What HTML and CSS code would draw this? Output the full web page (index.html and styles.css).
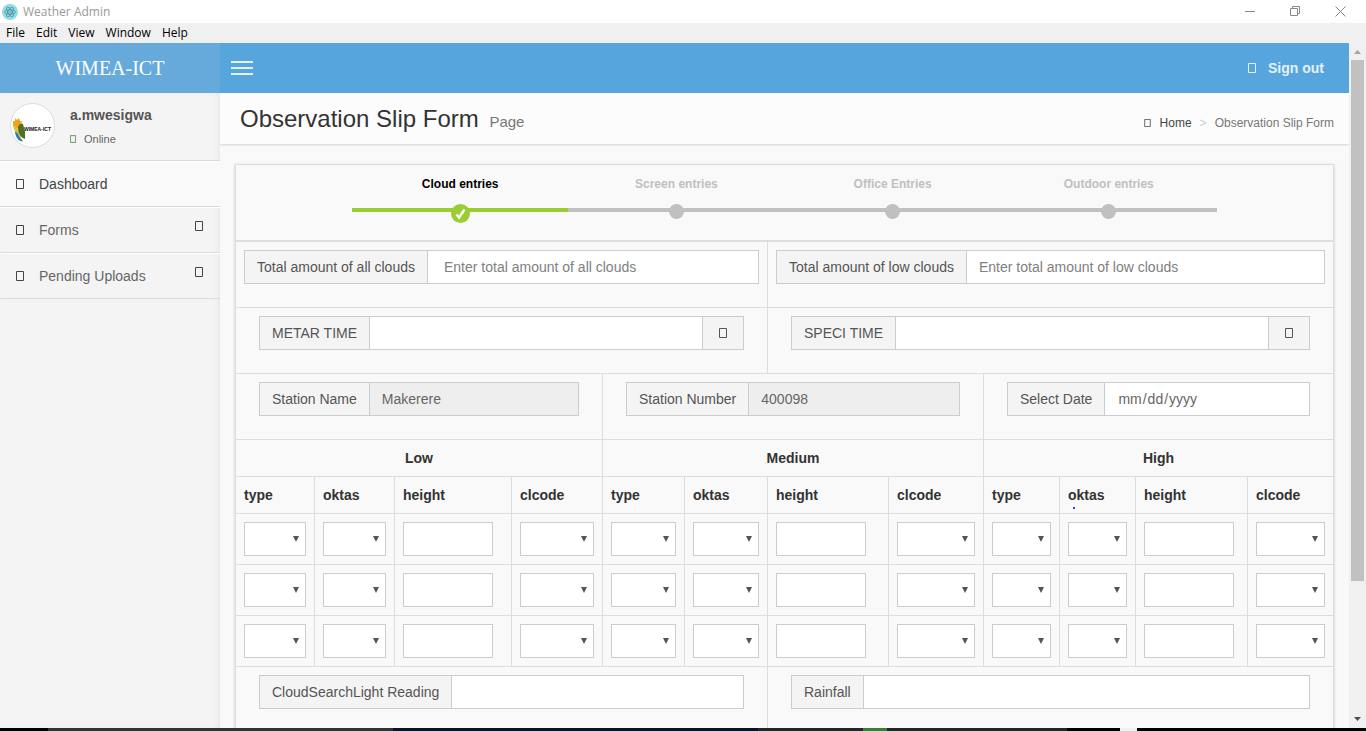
FILE: index.html
```html
<!DOCTYPE html>
<html lang="en">
<head>
<meta charset="utf-8">
<title>Weather Admin</title>
<link rel="stylesheet" href="styles.css">
</head>
<body>
<svg class="defs" aria-hidden="true">
  <symbol id="box" viewBox="0 0 8 10"><path d="M.5 .5h7v9h-7z" fill="none" stroke="currentColor"/></symbol>
</svg>
<div class="window">
  <div class="titlebar">
    <svg class="app-icon" viewBox="0 0 16 16" aria-hidden="true">
      <circle cx="8" cy="8" r="8" fill="#8fdbe6"/>
      <g fill="none" stroke="#4c8f9c" stroke-width=".8">
        <ellipse cx="8" cy="8" rx="5.4" ry="2.1"/>
        <ellipse cx="8" cy="8" rx="5.4" ry="2.1" transform="rotate(60 8 8)"/>
        <ellipse cx="8" cy="8" rx="5.4" ry="2.1" transform="rotate(120 8 8)"/>
      </g>
      <circle cx="8" cy="8" r=".8" fill="#4c8f9c"/>
    </svg>
    <span class="app-name">Weather Admin</span>
    <div class="window-buttons">
      <button type="button" aria-label="Minimize"><svg width="11" height="11" viewBox="0 0 11 11"><path d="M0 5.5h10"/></svg></button>
      <button type="button" aria-label="Restore"><svg width="11" height="11" viewBox="0 0 11 11"><path d="M.5 2.5h7v7h-7zM2.5 2.5v-2h7v7h-2"/></svg></button>
      <button type="button" aria-label="Close"><svg width="11" height="11" viewBox="0 0 11 11"><path d="M.5 .5l10 10M10.500 .5l-10 10"/></svg></button>
    </div>
  </div>
  <nav class="menubar" aria-label="Application menu">
    <button type="button">File</button>
    <button type="button">Edit</button>
    <button type="button">View</button>
    <button type="button">Window</button>
    <button type="button">Help</button>
  </nav>

  <div class="viewport">
    <div class="page">
      <header class="main-header">
        <a class="logo" href="#">WIMEA-ICT</a>
        <div class="navbar">
          <button type="button" class="toggle" aria-label="Toggle navigation"><span></span><span></span><span></span></button>
          <a class="signout" href="#"><svg class="glyph"><use href="#box"/></svg>Sign out</a>
        </div>
      </header>

      <div class="body">
        <aside class="sidebar">
          <div class="user-panel">
            <svg class="avatar" viewBox="0 0 45 45" role="img" aria-label="WIMEA-ICT">
              <circle cx="22.500" cy="22.500" r="22" fill="#fff" stroke="#dcdcdc"/>
              <path d="M3 22l0-4 2 0 0-3 2 2 2-2 1 3 2 0-1 4-4 4-3 0z" fill="#f3a21b"/>
              <path d="M4 23c3 1 5 4 6 9l3 7c-6-3-9-9-9-16z" fill="#d9c23a"/>
              <path d="M8 24c1-3 3-4 5-3l2 8 0 7c-5-2-7-6-7-12z" fill="#4f6f2a"/>
              <path d="M5 29c4 0 3 6 8 9-4 1-7-3-8-9z" fill="#2279c4"/>
              <text x="14" y="28" class="avatar-text">WIMEA-ICT</text>
            </svg>
            <div>
              <p class="user-name">a.mwesigwa</p>
              <a class="status" href="#"><svg class="glyph"><use href="#box"/></svg>Online</a>
            </div>
          </div>
          <nav class="side-menu" aria-label="Main">
            <a class="active" href="#"><svg class="glyph"><use href="#box"/></svg><span>Dashboard</span></a>
            <a href="#"><svg class="glyph"><use href="#box"/></svg><span>Forms</span><svg class="glyph caret"><use href="#box"/></svg></a>
            <a href="#"><svg class="glyph"><use href="#box"/></svg><span>Pending Uploads</span><svg class="glyph caret"><use href="#box"/></svg></a>
          </nav>
        </aside>

        <main class="content">
          <div class="content-header">
            <h1>Observation Slip Form <small>Page</small></h1>
            <nav class="breadcrumb" aria-label="Breadcrumb">
              <a href="#"><svg class="glyph"><use href="#box"/></svg>Home</a>
              <span class="sep">&gt;</span>
              <span>Observation Slip Form</span>
            </nav>
          </div>

          <form class="panel">
            <table class="slip">
              <colgroup>
                <col class="w79"><col class="w80"><col class="w117"><col class="w91">
                <col class="w82"><col class="w83"><col class="w121"><col class="w95">
                <col class="w76"><col class="w76"><col class="w112"><col class="w86">
              </colgroup>
              <thead>
                <tr><th colspan="12">
                  <ol class="steps">
                    <li class="current">Cloud entries<span class="dot"><svg viewBox="0 0 19 19"><path d="M5.500 10.500l2.500 3 5.500-8" fill="none" stroke="#fff" stroke-width="2.400"/></svg></span></li>
                    <li>Screen entries<span class="dot"></span></li>
                    <li>Office Entries<span class="dot"></span></li>
                    <li>Outdoor entries<span class="dot"></span></li>
                  </ol>
                </th></tr>
              </thead>
              <tbody>
                <tr>
                  <td colspan="6"><div class="group"><label for="all">Total amount of all clouds</label><input id="all" class="indent" type="text" placeholder="Enter total amount of all clouds"></div></td>
                  <td colspan="6"><div class="group"><label for="low">Total amount of low clouds</label><input id="low" type="text" placeholder="Enter total amount of low clouds"></div></td>
                </tr>
                <tr>
                  <td colspan="6"><div class="group inset"><label for="metar">METAR TIME</label><input id="metar" type="text"><button type="button" aria-label="Pick METAR time"><svg class="glyph"><use href="#box"/></svg></button></div></td>
                  <td colspan="6"><div class="group inset"><label for="speci">SPECI TIME</label><input id="speci" type="text"><button type="button" aria-label="Pick SPECI time"><svg class="glyph"><use href="#box"/></svg></button></div></td>
                </tr>
                <tr>
                  <td colspan="4"><div class="group inset"><label for="station">Station Name</label><input id="station" type="text" value="Makerere" readonly></div></td>
                  <td colspan="4"><div class="group inset"><label for="number">Station Number</label><input id="number" type="text" value="400098" readonly></div></td>
                  <td colspan="4"><div class="group inset"><label for="date">Select Date</label><input id="date" type="date"></div></td>
                </tr>
                <tr class="levels"><th colspan="4">Low</th><th colspan="4">Medium</th><th colspan="4">High</th></tr>
                <tr class="fields">
                  <th>type</th><th>oktas</th><th>height</th><th>clcode</th>
                  <th>type</th><th>oktas</th><th>height</th><th>clcode</th>
                  <th>type</th><th class="marked">oktas</th><th>height</th><th>clcode</th>
                </tr>
                <tr>
                  <td><div class="pick"><select aria-label="Low type 1"></select></div></td><td><div class="pick"><select aria-label="Low oktas 1"></select></div></td><td><input class="height" type="text" aria-label="Low height 1"></td><td><div class="pick"><select aria-label="Low clcode 1"></select></div></td>
                  <td><div class="pick"><select aria-label="Medium type 1"></select></div></td><td><div class="pick"><select aria-label="Medium oktas 1"></select></div></td><td><input class="height" type="text" aria-label="Medium height 1"></td><td><div class="pick"><select aria-label="Medium clcode 1"></select></div></td>
                  <td><div class="pick"><select aria-label="High type 1"></select></div></td><td><div class="pick"><select aria-label="High oktas 1"></select></div></td><td><input class="height" type="text" aria-label="High height 1"></td><td><div class="pick"><select aria-label="High clcode 1"></select></div></td>
                </tr>
                <tr>
                  <td><div class="pick"><select aria-label="Low type 2"></select></div></td><td><div class="pick"><select aria-label="Low oktas 2"></select></div></td><td><input class="height" type="text" aria-label="Low height 2"></td><td><div class="pick"><select aria-label="Low clcode 2"></select></div></td>
                  <td><div class="pick"><select aria-label="Medium type 2"></select></div></td><td><div class="pick"><select aria-label="Medium oktas 2"></select></div></td><td><input class="height" type="text" aria-label="Medium height 2"></td><td><div class="pick"><select aria-label="Medium clcode 2"></select></div></td>
                  <td><div class="pick"><select aria-label="High type 2"></select></div></td><td><div class="pick"><select aria-label="High oktas 2"></select></div></td><td><input class="height" type="text" aria-label="High height 2"></td><td><div class="pick"><select aria-label="High clcode 2"></select></div></td>
                </tr>
                <tr>
                  <td><div class="pick"><select aria-label="Low type 3"></select></div></td><td><div class="pick"><select aria-label="Low oktas 3"></select></div></td><td><input class="height" type="text" aria-label="Low height 3"></td><td><div class="pick"><select aria-label="Low clcode 3"></select></div></td>
                  <td><div class="pick"><select aria-label="Medium type 3"></select></div></td><td><div class="pick"><select aria-label="Medium oktas 3"></select></div></td><td><input class="height" type="text" aria-label="Medium height 3"></td><td><div class="pick"><select aria-label="Medium clcode 3"></select></div></td>
                  <td><div class="pick"><select aria-label="High type 3"></select></div></td><td><div class="pick"><select aria-label="High oktas 3"></select></div></td><td><input class="height" type="text" aria-label="High height 3"></td><td><div class="pick"><select aria-label="High clcode 3"></select></div></td>
                </tr>
                <tr>
                  <td colspan="6"><div class="group inset"><label for="csl">CloudSearchLight Reading</label><input id="csl" type="text"></div></td>
                  <td colspan="6"><div class="group inset"><label for="rain">Rainfall</label><input id="rain" type="text"></div></td>
                </tr>
              </tbody>
            </table>
          </form>
        </main>
      </div>
    </div>
    <div class="scrollbar" aria-hidden="true">
      <svg viewBox="0 0 17 17"><path d="M5 11h7l-3.500-4z" fill="#a3a3a3"/></svg>
      <div class="track"><div class="thumb"></div></div>
      <svg viewBox="0 0 17 17"><path d="M5 6h7l-3.500 4z" fill="#505050"/></svg>
    </div>
  </div>
  <div class="taskbar"></div>
</div>
</body>
</html>
```
FILE: styles.css
```css
* { box-sizing: border-box; }

body {
  margin: 0;
  font: 14px/20px "Liberation Sans", Arial, sans-serif;
  color: #333;
  background: #f9f9f9;
}

a { color: inherit; text-decoration: none; }
button, input, select { font: inherit; color: inherit; }
button { border: 0; padding: 0; background: none; }

.defs { position: absolute; width: 0; height: 0; }
.glyph { display: block; flex: none; width: 8px; height: 10px; }

.window { display: flex; flex-direction: column; height: 100vh; overflow: hidden; }

/* Window chrome */
.titlebar {
  display: flex;
  align-items: center;
  flex: none;
  height: 23px;
  padding-left: 2px;
  background: #fff;
  font: 12px/20px "Open Sans", "Noto Sans", sans-serif;
  color: #999;
}
.app-icon { width: 16px; height: 16px; margin-right: 5px; }
.window-buttons { display: flex; margin-left: auto; padding-right: 3px; }
.window-buttons button { display: grid; place-items: center; width: 45px; height: 20px; }
.window-buttons svg { fill: none; stroke: #888; }

.menubar {
  display: flex;
  flex: none;
  gap: 11px;
  height: 20px;
  padding-left: 6px;
  background: #f0f0f0;
  font: 12px/20px "Open Sans", "Noto Sans", sans-serif;
  color: #000;
}

.viewport { display: flex; flex: 1; min-height: 0; }
.page { display: flex; flex-direction: column; flex: 1; min-width: 0; overflow: hidden; }

.scrollbar { display: flex; flex-direction: column; width: 17px; background: #f0f0f0; }
.scrollbar svg { flex: none; width: 17px; height: 17px; }
.track { flex: 1; padding: 0 2px; }
.thumb { height: 80%; background: #c1c1c1; }

.taskbar {
  flex: none;
  height: 3px;
  background: linear-gradient(90deg, #000 48px, #333133 48px 393px, #0a1424 393px 758px, #262628 758px 863px, #3f7a3c 863px 887px, #262628 887px 1067px, #000 1067px 1120px, #f0f0f0 1120px 1137px, #000 1137px);
}

/* Page header */
.main-header { display: flex; flex: none; height: 50px; color: #e4f0f9; }
.logo {
  width: 220px;
  background: #66aadc;
  color: #fff;
  font: 20px/50px "Liberation Serif", "Times New Roman", serif;
  text-align: center;
}
.navbar {
  display: flex;
  align-items: center;
  justify-content: space-between;
  flex: 1;
  padding: 0 25px 0 11px;
  background: #56a5dc;
}
.toggle { display: grid; gap: 4px; width: 22px; }
.toggle span { height: 2px; background: #e4f0f9; }
.signout { display: flex; align-items: center; gap: 12px; font-weight: bold; }

.body { display: flex; flex: 1; min-height: 0; }

/* Sidebar */
.sidebar {
  flex: none;
  width: 220px;
  background: #f4f4f4;
  box-shadow: inset -3px 0 8px -4px rgba(0, 0, 0, .1);
  color: #666;
}
.user-panel { display: flex; gap: 15px; padding: 10px; height: 67px; }
.avatar { width: 45px; height: 45px; }
.avatar-text { font: bold 5px "Liberation Sans", sans-serif; fill: #111; }
.user-name { margin: 2px 0 4px; color: #555; font-weight: bold; }
.status { display: flex; align-items: center; gap: 8px; font-size: 11px; }
.status .glyph { width: 6px; height: 8px; color: #3c763d; }

.side-menu { border-top: 1px solid #dbdbdb; }
.side-menu a {
  display: flex;
  align-items: center;
  gap: 15px;
  height: 46px;
  padding: 0 17px 0 16px;
  border-top: 1px solid #fff;
  border-bottom: 1px solid #dbdbdb;
}
.side-menu .glyph { color: #444; }
.side-menu .active { background: #f9f9f9; color: #444; }
.side-menu .caret { margin: 0 0 8px auto; }

/* Content */
.content { flex: 1; min-width: 0; overflow: hidden; }
.content-header {
  display: flex;
  align-items: center;
  justify-content: space-between;
  height: 51px;
  padding: 4px 15px 0 20px;
  background: #fcfcfc;
  box-shadow: 0 1px 2px rgba(0, 0, 0, .15);
}
h1 { margin: 0; font-size: 24px; line-height: 26px; font-weight: normal; }
h1 small { margin-left: 4px; font-size: 15px; color: #777; }
.breadcrumb { display: flex; align-items: center; gap: 8px; margin-top: 4px; font-size: 12px; color: #777; }
.breadcrumb a { display: flex; align-items: center; gap: 9px; color: #444; }
.breadcrumb .glyph { width: 7px; height: 8px; }
.sep { color: #ccc; }

.panel { margin: 20px 15px 0; box-shadow: 0 1px 3px rgba(0, 0, 0, .2); }

.slip { width: 100%; table-layout: fixed; border-collapse: collapse; background: #f9f9f9; }
.slip th, .slip td { padding: 8px; border: 1px solid #ddd; text-align: left; vertical-align: top; }
.slip thead th { padding-bottom: 17px; border-bottom-width: 2px; }
.slip .levels th { text-align: center; }

.w76 { width: 76px; }
.w79 { width: 79px; }
.w80 { width: 80px; }
.w82 { width: 82px; }
.w83 { width: 83px; }
.w86 { width: 86px; }
.w91 { width: 91px; }
.w95 { width: 95px; }
.w112 { width: 112px; }
.w117 { width: 117px; }
.w121 { width: 121px; }

.steps {
  display: grid;
  grid-template-columns: repeat(4, 1fr);
  width: 80%;
  margin: 0 auto;
  padding: 0;
  list-style: none;
  font-size: 12px;
  color: #c0c0c0;
  text-align: center;
}
.steps li {
  height: 50px;
  padding-top: 1px;
  background: linear-gradient(#c0c0c0, #c0c0c0) 0 35px / 100% 4px no-repeat;
}
.steps .current { color: #000; background-image: linear-gradient(#9acd32, #9acd32); }
.dot { display: block; width: 15px; height: 15px; margin: 10px auto 0; border-radius: 50%; background: #c0c0c0; }
.current .dot { width: 19px; height: 19px; background: #9acd32; }
.dot svg { display: block; }

/* Form controls */
.group { display: flex; height: 34px; margin-bottom: 15px; }
.inset { margin-left: 15px; margin-right: 15px; }
.group label, .group button {
  flex: none;
  padding: 6px 12px;
  border: 1px solid #ccc;
  background: #f4f4f4;
  color: #555;
}
.group label { border-right: 0; }
.group button { display: grid; place-items: center; width: 41px; border-left: 0; }
.group input { flex: 1; min-width: 0; }

input, select {
  height: 34px;
  padding: 6px 12px;
  border: 1px solid #ccc;
  border-radius: 0;
  background: #fff;
  color: #666;
  outline: 0;
}
input::placeholder { color: #808080; opacity: 1; }
input[readonly] { background: #eee; }
.group .indent { padding-left: 16px; }
input::-webkit-calendar-picker-indicator { display: none; }
.height { display: block; width: 90px; }

.pick { position: relative; }
.pick select { display: block; width: 100%; appearance: none; }
.pick::after {
  content: "";
  position: absolute;
  right: 7px;
  top: 14px;
  width: 6px;
  height: 6px;
  background: #555;
  clip-path: polygon(0 0, 100% 0, 50% 100%);
  pointer-events: none;
}

.marked { position: relative; }
.marked::after {
  content: "";
  position: absolute;
  left: 13px;
  bottom: 4px;
  width: 2px;
  height: 2px;
  background: #33f;
}
```
